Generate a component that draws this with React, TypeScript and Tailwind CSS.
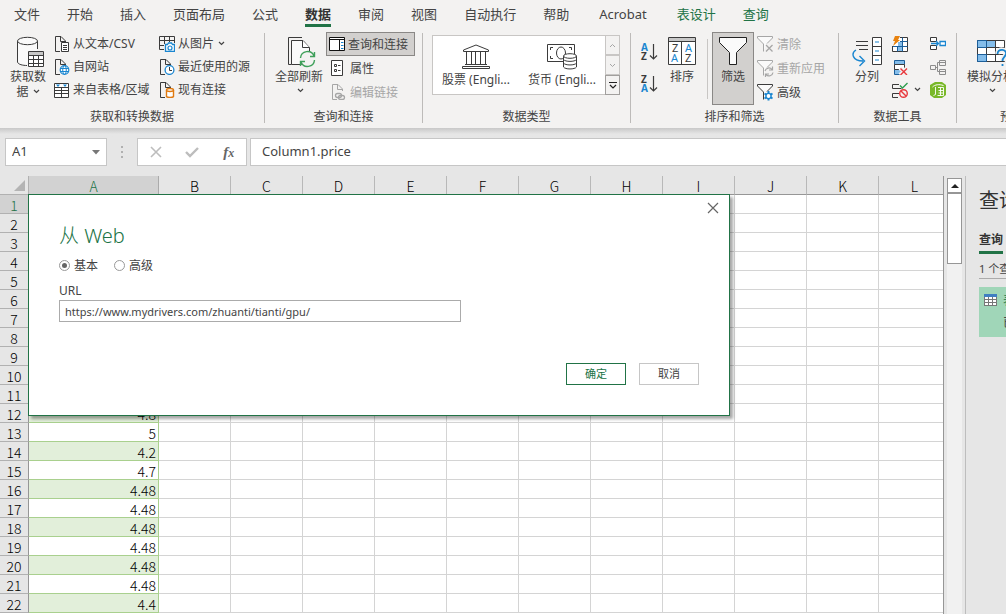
import { useState } from 'react'
import type { ReactNode } from 'react'
import clsx from 'clsx'

const INK = '#3b3b3b'
const BLUE = '#1a86d0'
const GRAY = '#a6a6a6'

const tabs = ['文件', '开始', '插入', '页面布局', '公式', '数据', '审阅', '视图', '自动执行', '帮助', 'Acrobat', '表设计', '查询']
const columns = 'ABCDEFGHIJKLMNOPQRST'.split('')
const values = ['', '', '', '', '', '', '', '', '', '', '', '4.8', '5', '4.2', '4.7', '4.48', '4.48', '4.48', '4.48', '4.48', '4.48', '4.4']

function Svg({ w = 16, h = 16, children }: { w?: number; h?: number; children: ReactNode }) {
  return (
    <svg width={w} height={h} viewBox={`0 0 ${w} ${h}`} fill="none" className="shrink-0" aria-hidden="true">
      {children}
    </svg>
  )
}

function Chevron() {
  return (
    <Svg w={7} h={5}>
      <path d="M1 1l2.5 2.5L6 1" stroke="#444" strokeWidth="1.2" />
    </Svg>
  )
}

// page outline shared by several of the small icons
function Page({ color = INK }: { color?: string }) {
  return (
    <>
      <path d="M6 15.5H1.5V.5H7L11.5 5V7" fill="none" stroke={color} />
      <path d="M6.5.5V5.5H11.5" stroke={color} />
    </>
  )
}

function TextFileIcon() {
  return (
    <Svg>
      <Page />
      <path d="M7.5 6.5H14.5V15.5H7.5Z" fill="#fff" stroke={INK} />
      <path d="M9 9.5H13M9 11.5H13M9 13.5H13" stroke={INK} />
    </Svg>
  )
}

function WebIcon() {
  return (
    <Svg>
      <Page />
      <circle cx="10.5" cy="11" r="4.3" fill="#fff" stroke={BLUE} strokeWidth="1.2" />
      <ellipse cx="10.5" cy="11" rx="1.8" ry="4.3" stroke={BLUE} />
      <path d="M6.5 9.5H14.5M6.5 12.5H14.5" stroke={BLUE} />
    </Svg>
  )
}

function RangeIcon() {
  return (
    <Svg>
      <path d="M.5 1.5H14.5V15.5H.5ZM.5 5.5H14.5M.5 8.5H14.5M.5 11.5H14.5M7.5 5.5V15.5" fill="#fff" stroke={INK} />
      <path d="M2 2.500H6L4 5ZM9 2.500H13L11 5Z" fill={BLUE} />
    </Svg>
  )
}

function PictureIcon() {
  return (
    <Svg>
      <path d="M.5 .5H15.5V7M.5 .5V13.5H5M.5 4.5H15.5M.5 9.5H5M5.5 .5V8M10.5 .5V6" stroke={INK} />
      <path d="M6.5 8.5H8.5L9.5 7H12.5L13.5 8.5H15.5V15.5H6.5Z" fill="#fff" stroke={BLUE} strokeWidth="1.3" />
      <circle cx="11" cy="12" r="2" stroke={BLUE} strokeWidth="1.2" />
    </Svg>
  )
}

function RecentIcon() {
  return (
    <Svg>
      <Page />
      <circle cx="10.5" cy="11" r="4.4" fill="#fff" stroke={BLUE} strokeWidth="1.3" />
      <path d="M10.5 8V11.5H13" stroke={INK} />
    </Svg>
  )
}

function ConnectionIcon() {
  return (
    <Svg>
      <Page />
      <path d="M7.5 8V14.5C8.5 15.8 13.500 15.800 14.500 14.500V8" fill="#fff" stroke="#e07a10" strokeWidth="1.4" />
      <ellipse cx="11" cy="8" rx="3.5" ry="1.5" fill="#fff" stroke="#e07a10" strokeWidth="1.4" />
    </Svg>
  )
}

function DatabaseIcon() {
  return (
    <Svg w={28} h={32}>
      <path d="M2 6H21V15H13V29C6 29 2 28 2 26Z" fill="#fafafa" />
      <path d="M1.5 5V26C2 28.5 7 29.5 11 29.5M21.5 5V13" stroke={INK} />
      <ellipse cx="11.5" cy="5" rx="10" ry="3.7" fill="#fafafa" stroke={INK} />
      <path d="M12.5 15.5H27.5V30.5H12.5Z" fill="#fff" stroke={INK} />
      <path d="M13 16H27V19H13Z" fill="#c8c8c8" />
      <path d="M12.5 19.5H27.5M12.5 23.5H27.5M12.5 27.5H27.5M17.5 19.5V30.5M22.5 19.5V30.5" stroke={INK} />
    </Svg>
  )
}

function RefreshAllIcon() {
  return (
    <Svg w={28} h={32}>
      <path d="M3.5 28.5H.5V1.5H14" stroke={INK} />
      <path d="M14 28.5H3.5V4.5H15L21.5 11.5V15" fill="#fafafa" stroke={INK} />
      <path d="M14.5 4.5V11.5H21.5" fill="#fff" stroke={INK} />
      <circle cx="19.5" cy="23" r="8" fill="#f3f2f1" />
      <path d="M12.5 22A7 7 0 0 1 26 20M26.500 24A7 7 0 0 1 13 26M26.500 16V20.500H22M12.500 30V25.500H17" stroke="#3fa05a" strokeWidth="1.400" />
    </Svg>
  )
}

function PaneIcon() {
  return (
    <Svg>
      <path d="M.5 1.5H15.5V14.5H.5Z" fill="#fff" stroke="#111" />
      <path d="M.5 3.5H15.5M10.5 3.5V14.5" stroke="#111" />
      <path d="M12 6.5H14.5M12 9.5H14.5M12 12.5H14.5" stroke={BLUE} />
    </Svg>
  )
}

function PropertiesIcon() {
  return (
    <Svg>
      <path d="M.5 .5H11.5V15.5H.5Z" fill="#fff" stroke={INK} />
      <path d="M3.500 4.500H5.500V6.500H3.500ZM3.500 9.500H5.500V11.500H3.500Z" stroke={INK} />
      <path d="M7 5.5H9.5M7 10.5H9.5" stroke={INK} />
    </Svg>
  )
}

function EditLinksIcon() {
  return (
    <Svg>
      <Page color={GRAY} />
      <rect x="4.5" y="9.5" width="6" height="4" rx="2" stroke={GRAY} strokeWidth="1.3" />
      <rect x="7.5" y="11.5" width="6" height="4" rx="2" stroke={GRAY} strokeWidth="1.3" />
    </Svg>
  )
}

function BankIcon() {
  return (
    <Svg w={28} h={26}>
      <path d="M1.5 7.5V6L14 1L26.5 6V7.5Z" fill="#fff" stroke={INK} />
      <path d="M4.5 8V20M9.5 8V20M13.500 8V20M18.500 8V20M23.500 8V20M3 20.500H25M.5 24.500V22.500H27.500V24.500Z" stroke={INK} />
    </Svg>
  )
}

function MoneyIcon() {
  return (
    <Svg w={31} h={28}>
      <path d="M.5 2.5H27.5V19.5H.5Z" fill="#fff" stroke={INK} />
      <path d="M6 5.5H3.5V8M3.5 14V16.5H6M22 5.5H24.5V8" stroke={INK} />
      <ellipse cx="14" cy="11" rx="4.5" ry="6" stroke={INK} />
      <path d="M16.5 14V25C18 27.6 28 27.6 29.5 25V14" fill="#fff" stroke={INK} />
      <ellipse cx="23" cy="14" rx="6.5" ry="2.3" fill="#fff" stroke={INK} />
      <path d="M16.5 17.5C18 20 28 20 29.5 17.5M16.5 21C18 23.6 28 23.6 29.5 21" stroke={INK} />
    </Svg>
  )
}

function SortArrowIcon({ top, bottom }: { top: string; bottom: string }) {
  return (
    <svg width={18} height={20} viewBox="0 0 18 20" className="overflow-visible" aria-hidden="true" fontFamily="Noto Sans, sans-serif" fontWeight="700" fontSize="10">
      <text x="0" y="9" fill={top === 'A' ? BLUE : INK}>{top}</text>
      <text x="0" y="18" fill={bottom === 'A' ? BLUE : INK}>{bottom}</text>
      <path d="M12.5 2V17M9 13.5L12.5 17L16 13.5" fill="none" stroke={INK} strokeWidth="1.2" />
    </svg>
  )
}

function SortIcon() {
  return (
    <svg width={28} height={32} viewBox="0 0 28 32" aria-hidden="true" fontFamily="Noto Sans, sans-serif" fontSize="11">
      <path d="M.5 1.5H27.5V28.5H.5Z" fill="#fff" stroke={INK} />
      <path d="M1 2H27V5H1Z" fill="#c8c8c8" />
      <path d="M.5 5.5H27.5M13.5 5.5V28.5" stroke={INK} />
      <text x="4" y="16" fill={INK}>Z</text>
      <text x="3" y="26" fill={BLUE}>A</text>
      <text x="17" y="16" fill={BLUE}>A</text>
      <text x="17" y="26" fill={INK}>Z</text>
    </svg>
  )
}

function FunnelIcon() {
  return (
    <Svg w={28} h={32}>
      <path d="M.5 1.5H27.5V6.5L17.5 16.5V28.5H10.5V16.5L.5 6.5Z" fill="#fafafa" stroke="#222" />
    </Svg>
  )
}

function SmallFunnel({ color, children }: { color: string; children: ReactNode }) {
  return (
    <Svg w={17} h={17}>
      <path d="M6.5 15.5V8L.5 2V.5H15.5V2L10 7.5" fill="#fafafa" stroke={color} />
      {children}
    </Svg>
  )
}

function ClearIcon() {
  return (
    <SmallFunnel color={GRAY}>
      <path d="M9 9L15.5 15.5M15.5 9L9 15.5" stroke={GRAY} strokeWidth="1.3" />
    </SmallFunnel>
  )
}

function ReapplyIcon() {
  return (
    <SmallFunnel color={GRAY}>
      <path d="M8 11A4 4 0 0 1 15 9.5M16 12.5A4 4 0 0 1 9 14.5M15.5 6.5V10H12M8.5 17V14H12" stroke={GRAY} strokeWidth="1.2" />
    </SmallFunnel>
  )
}

function AdvancedIcon() {
  return (
    <SmallFunnel color={INK}>
      <path d="M11.5 7V16.5M7.5 9.5L15.5 14.5M15.5 9.5L7.5 14.5" stroke={BLUE} strokeWidth="2" />
      <circle cx="11.5" cy="12" r="2.6" fill="#fff" stroke={BLUE} strokeWidth="1.4" />
    </SmallFunnel>
  )
}

function SplitIcon() {
  return (
    <Svg w={30} h={32}>
      <path d="M4 5.5H16M4 9.5H16M7 13.5H16" stroke={INK} />
      <path d="M20.5 1.5H29.5V28.5H20.5ZM20.5 10.5H29.5M20.5 19.5H29.5" fill="#fff" stroke={INK} />
      <path d="M23 6H27M23 15H27M23 24H27" stroke={BLUE} strokeWidth="1.2" />
      <path d="M4 14C-1 17 0 25 11 25M7.5 20L12.5 25L7.5 30" stroke={BLUE} strokeWidth="1.4" />
    </Svg>
  )
}

function FlashFillIcon() {
  return (
    <Svg>
      <path d="M8 1.5H15.5V15.5H.5V10" fill="#fff" stroke={INK} />
      <path d="M6 6H10V15H6Z" fill="#84bdea" />
      <path d="M1 10.5H15.5M8 5.5H15.5M5.5 10.5V15.5M10.5 1.5V15.5" stroke="#1c5f9a" />
      <path d="M3 0H8L6 4H8L1 10L3 5H1Z" fill="#e8820e" />
    </Svg>
  )
}

function DuplicatesIcon() {
  return (
    <Svg>
      <path d="M2.5 1.5H12.5V5.5H2.5ZM2.5 10.5H9V15.5H2.5Z" fill="#84bdea" stroke="#1c5f9a" />
      <path d="M2.5 5.5H12.5V10.5H2.5Z" fill="#fff" stroke={INK} />
      <path d="M8 9L15 16M15 9L8 16" stroke="#f3f2f1" strokeWidth="4" />
      <path d="M8.5 9.5L15 16M15 9.5L8.5 16" stroke="#e8383d" strokeWidth="1.4" />
    </Svg>
  )
}

function ValidationIcon() {
  return (
    <Svg>
      <path d="M7 2.5H.5V6.5H9.5M7 11.5H.5V15.5H6" stroke={INK} />
      <path d="M8 3.5L10.5 6L15.5 1" stroke="#2e9e4f" strokeWidth="1.4" />
      <circle cx="11.5" cy="11.5" r="3.8" stroke="#e8383d" strokeWidth="1.4" />
      <path d="M9 9L14 14" stroke="#e8383d" strokeWidth="1.4" />
    </Svg>
  )
}

function ConsolidateIcon() {
  return (
    <Svg>
      <path d="M6.5 5V1.5H.5V5.5H6.5M.5 9.5H6.5V13.5H.5Z" fill="#fff" stroke={INK} />
      <path d="M1 7.5H8M6 5L8.5 7.5L6 10" stroke={BLUE} strokeWidth="1.3" />
      <path d="M10 5.5H15.5V9.5H10Z" fill="#fff" stroke={BLUE} strokeWidth="1.3" />
    </Svg>
  )
}

function RelationshipsIcon() {
  return (
    <Svg>
      <path d="M.5 6.5H5.5V10.5H.5ZM9.5 1.5H15.5V6.5H9.5ZM9.5 10.5H15.5V15.5H9.5ZM5.5 8.5H7.5M9.5 3.5H7.5V12.5H9.5M9.5 3.5H15.5M9.5 12.5H15.5" stroke="#8c8c8c" />
    </Svg>
  )
}

function ModelIcon() {
  return (
    <Svg>
      <path d="M0 3L5 0H12L16 3V13L12 16H4L0 13Z" fill="#79b829" />
      <path d="M2.500 5C5 2.500 9 2 13.500 3.500" stroke="#fff" />
      <path d="M5.500 5V12.500L3.500 13.500M8 5.500H13.500V13.500H7.500M8.500 8.500H13.500M8.500 11H13.500M10.500 5.500V13.500" stroke="#fff" strokeWidth=".9" />
    </Svg>
  )
}

function WhatIfIcon() {
  return (
    <Svg w={31} h={32}>
      <path d="M1.5 4.5H28.5V25.5H1.5Z" fill="#fff" stroke={INK} />
      <path d="M2 5H11V11H2ZM2 19H11V25H2ZM11 5H19V11H11Z" fill="#84bdea" />
      <path d="M1.5 11.5H28.5M1.5 18.5H28.5M10.5 4.5V25.5M19.5 4.5V25.5" stroke={INK} />
      <path d="M1.5 4.5H10.5V11.5H1.5ZM1.5 18.5H10.5V25.5H1.5Z" stroke="#1c5f9a" />
      <path d="M21.5 18C22 12 31 13 30 18C29.5 21 26.5 21 26.5 25M26.5 27.5V30" stroke="#f3f2f1" strokeWidth="5" />
      <path d="M21.5 18C22 12 31 13 30 18C29.5 21 26.5 21 26.5 25M26.5 28V30" stroke={BLUE} strokeWidth="1.8" />
    </Svg>
  )
}

function Group({ label, className, children }: { label: string; className: string; children: ReactNode }) {
  return (
    <>
      <section aria-label={label} className={clsx('flex shrink-0 flex-col', className)}>
        <div className="flex h-[76px] items-start">{children}</div>
        <div className="text-center leading-[18px]">{label}</div>
      </section>
      <div className="mt-px h-[90px] w-px shrink-0 bg-[#bdbbb9]" />
    </>
  )
}

function Small({ icon, label, disabled, className }: { icon: ReactNode; label: ReactNode; disabled?: boolean; className?: string }) {
  return (
    <button
      type="button"
      disabled={disabled}
      className={clsx('flex items-center gap-[3px] whitespace-nowrap disabled:text-[#a6a6a6]', className)}
    >
      {icon}
      {label}
    </button>
  )
}

function Ribbon() {
  return (
    <div className="flex h-24 overflow-hidden text-[12px] leading-[15px] text-[#444]">
      <Group label="获取和转换数据" className="w-[264px]">
        <button type="button" className="ml-2.5 flex w-9 flex-col items-center whitespace-nowrap pt-1">
          <span className="pb-px pl-1"><DatabaseIcon /></span>
          获取数
          <span className="flex items-center gap-1">据 <Chevron /></span>
        </button>
        <div className="ml-2 w-[105px]">
          <Small className="h-[23px]" icon={<TextFileIcon />} label="从文本/CSV" />
          <Small className="h-[23px]" icon={<WebIcon />} label="自网站" />
          <Small className="h-[23px]" icon={<RangeIcon />} label="来自表格/区域" />
        </div>
        <div>
          <Small className="h-[23px]" icon={<PictureIcon />} label={<span className="flex items-center gap-1">从图片 <Chevron /></span>} />
          <Small className="h-[23px]" icon={<RecentIcon />} label="最近使用的源" />
          <Small className="h-[23px]" icon={<ConnectionIcon />} label="现有连接" />
        </div>
      </Group>

      <Group label="查询和连接" className="w-[157px]">
        <button type="button" className="ml-2.5 flex w-12 flex-col items-center whitespace-nowrap pt-1">
          <span className="pb-px pl-1.5"><RefreshAllIcon /></span>
          全部刷新
          <span className="pl-0.5 pt-1"><Chevron /></span>
        </button>
        <div className="ml-[3px]">
          <Small className="h-6 w-[89px] border border-[#8a8886] bg-[#d2d0ce] pl-0.5" icon={<PaneIcon />} label="查询和连接" />
          <Small className="h-6 pl-[5px]" icon={<PropertiesIcon />} label="属性" />
          <Small className="h-6 pl-[5px]" icon={<EditLinksIcon />} label="编辑链接" disabled />
        </div>
      </Group>

      <Group label="数据类型" className="w-[207px]">
        <div className="ml-[9px] mt-[3px] flex h-[60px] w-[188px] border border-[#c8c6c4] bg-white">
          <button type="button" className="flex flex-1 flex-col items-center justify-end gap-0.5 whitespace-nowrap pb-[7px]">
            <BankIcon />
            股票 (Engli...
          </button>
          <button type="button" className="flex flex-1 flex-col items-center justify-end gap-0.5 whitespace-nowrap pb-[7px]">
            <MoneyIcon />
            货币 (Engli...
          </button>
          <div className="-my-px -mr-px flex w-[15px] flex-col bg-[#f3f2f1]">
            <button type="button" disabled aria-label="上一行" className="flex flex-1 items-center justify-center border border-[#c8c6c4]">
              <Svg w={7} h={5}><path d="M1 4l2.5-2.5L6 4" stroke={GRAY} /></Svg>
            </button>
            <button type="button" disabled aria-label="下一行" className="flex flex-1 items-center justify-center border border-[#c8c6c4]">
              <Svg w={7} h={5}><path d="M1 1l2.5 2.5L6 1" stroke={GRAY} /></Svg>
            </button>
            <button type="button" aria-label="其他" className="flex flex-1 items-center justify-center border border-[#a19f9d]">
              <Svg w={8} h={8}><path d="M0 1.5H8M1 4L4 7L7 4" stroke="#222" strokeWidth="1.2" /></Svg>
            </button>
          </div>
        </div>
      </Group>

      <Group label="排序和筛选" className="w-[207px]">
        <div className="ml-2.5 flex w-5 flex-col pt-1">
          <button type="button" aria-label="升序" className="flex h-8 items-center"><SortArrowIcon top="A" bottom="Z" /></button>
          <button type="button" aria-label="降序" className="flex h-8 items-center"><SortArrowIcon top="Z" bottom="A" /></button>
        </div>
        <button type="button" className="ml-[7px] flex flex-col items-center pt-1">
          <span className="pb-px"><SortIcon /></span>
          排序
        </button>
        <div className="ml-[11px] mt-[7px] h-[60px] w-px bg-[#c8c6c4]" />
        <button type="button" className="ml-1 flex h-[73px] w-[42px] flex-col items-center border border-[#8a8886] bg-[#d2d0ce] pt-[3px]">
          <span className="pb-px"><FunnelIcon /></span>
          筛选
        </button>
        <div className="ml-[3px]">
          <Small className="h-6" icon={<ClearIcon />} label="清除" disabled />
          <Small className="h-6" icon={<ReapplyIcon />} label="重新应用" disabled />
          <Small className="h-6" icon={<AdvancedIcon />} label="高级" />
        </div>
      </Group>

      <Group label="数据工具" className="w-[117px]">
        <button type="button" className="ml-[13px] flex w-[30px] flex-col items-center pt-1">
          <span className="pb-px"><SplitIcon /></span>
          分列
        </button>
        <div className="ml-2.5 w-[38px]">
          <button type="button" aria-label="快速填充" className="flex h-[23px] items-center"><FlashFillIcon /></button>
          <button type="button" aria-label="删除重复值" className="flex h-[23px] items-center"><DuplicatesIcon /></button>
          <button type="button" aria-label="数据验证" className="flex h-[23px] items-center gap-1.5"><ValidationIcon /><Chevron /></button>
        </div>
        <div>
          <button type="button" aria-label="合并计算" className="flex h-[23px] items-center"><ConsolidateIcon /></button>
          <button type="button" aria-label="关系" disabled className="flex h-[23px] items-center"><RelationshipsIcon /></button>
          <button type="button" aria-label="管理数据模型" className="flex h-[23px] items-center"><ModelIcon /></button>
        </div>
      </Group>

      <Group label="预测" className="w-[110px]">
        <button type="button" className="ml-2.5 flex w-12 flex-col items-center whitespace-nowrap pt-1">
          <span className="pb-px"><WhatIfIcon /></span>
          模拟分析
          <span className="pl-0.5 pt-1"><Chevron /></span>
        </button>
      </Group>
    </div>
  )
}

function FormulaBar() {
  return (
    <div className="flex h-7 items-stretch pl-[5px] text-[13px] text-[#444]">
      <div className="flex w-[102px] items-center border border-[#c6c6c6] bg-white pl-1.5 pr-1.5">
        <input aria-label="名称框" defaultValue="A1" className="w-0 flex-1 outline-none" />
        <button type="button" aria-label="名称列表">
          <Svg w={8} h={5}><path d="M0 0H8L4 4.5Z" fill="#777" /></Svg>
        </button>
      </div>
      <div className="flex w-[30px] items-center justify-center">
        <Svg w={2} h={12}><path d="M0 0H2V2H0ZM0 5H2V7H0ZM0 10H2V12H0Z" fill="#b0b0b0" /></Svg>
      </div>
      <div className="flex w-[110px] items-center justify-around border border-[#c6c6c6] bg-white">
        <button type="button" aria-label="取消">
          <Svg w={12} h={12}><path d="M1 1L11 11M11 1L1 11" stroke="#bdbdbd" strokeWidth="1.6" /></Svg>
        </button>
        <button type="button" aria-label="输入">
          <Svg w={14} h={12}><path d="M1 6L5 10L13 2" stroke="#bdbdbd" strokeWidth="2.4" /></Svg>
        </button>
        <button type="button" aria-label="插入函数" className="font-['Liberation_Serif',serif] text-[15px] font-bold italic leading-5 text-[#666]">
          f<span className="text-[12px]">x</span>
        </button>
      </div>
      <input
        aria-label="编辑栏"
        defaultValue="Column1.price"
        className="ml-[3px] min-w-0 flex-1 border border-r-0 border-[#c6c6c6] bg-white pl-[11px] outline-none"
      />
    </div>
  )
}

function Sheet() {
  return (
    <div className="min-w-0 flex-1 overflow-hidden border-r border-[#969696] bg-white">
      <table className="w-[1527px] table-fixed border-separate border-spacing-0 font-['Noto_Sans_CJK_SC',sans-serif] text-[14px] leading-4 text-black">
        <colgroup>
          <col className="w-[29px]" />
          <col className="w-[130px]" />
          {columns.slice(1).map((c) => (
            <col key={c} className="w-[72px]" />
          ))}
        </colgroup>
        <thead>
          <tr className="h-[19px] bg-[#e6e6e6]">
            <th className="border-b border-r border-[#b1b1b1] p-0">
              <div className="flex justify-end pr-[3px]">
                <Svg w={11} h={11}><path d="M11 0V11H0Z" fill="#b4b4b4" /></Svg>
              </div>
            </th>
            {columns.map((c) => (
              <th
                key={c}
                scope="col"
                className={clsx(
                  'h-[19px] border-b border-r p-0 align-bottom font-light',
                  c === 'A' ? 'border-b-[#217346] border-r-[#ababab] bg-[#d2d2d2] text-[#217346]' : 'border-b-[#969696] border-r-[#b8b8b8]',
                )}
              >
                {c}
              </th>
            ))}
          </tr>
        </thead>
        <tbody>
          {values.map((v, i) => (
            <tr key={i} className="h-[19px]">
              <th
                scope="row"
                className={clsx(
                  'h-[19px] border-b border-r border-b-[#b1b1b1] border-r-[#969696] p-0 pt-0.5 font-light',
                  i === 0 ? 'bg-[#d2d2d2] text-[#217346]' : 'bg-[#e6e6e6]',
                )}
              >
                {i + 1}
              </th>
              {columns.map((c) => (
                <td
                  key={c}
                  className={clsx(
                    'border-b border-r p-0 pt-0.5 text-right font-light',
                    c === 'A' ? 'border-[#a9d08e] pr-0.5' : 'border-[#d4d4d4]',
                    c === 'A' && i % 2 === 1 && 'bg-[#e2efda]',
                  )}
                >
                  {c === 'A' ? v : ''}
                </td>
              ))}
            </tr>
          ))}
        </tbody>
      </table>
    </div>
  )
}

function WebDialog() {
  const [mode, setMode] = useState('basic')
  const [url, setUrl] = useState('https://www.mydrivers.com/zhuanti/tianti/gpu/')
  const radio = '-mt-0.5 size-[11px] appearance-none rounded-full border border-[#999] bg-clip-content p-[2px] checked:bg-[#666]'

  return (
    <form
      role="dialog"
      aria-labelledby="dialog-title"
      onSubmit={(e) => e.preventDefault()}
      className="absolute left-7 top-[18px] w-[702px] border border-[#217346] bg-white px-[30px] pb-[30px] text-[12px] leading-4 text-[#444] shadow-[3px_3px_3px_rgba(0,0,0,0.35)]"
    >
      <div className="-mr-5 flex h-[26px] items-center justify-end">
        <button type="button" aria-label="关闭">
          <Svg w={12} h={12}><path d="M1 1L11 11M11 1L1 11" stroke="#666" strokeWidth="1.2" /></Svg>
        </button>
      </div>
      <h1 id="dialog-title" className="mt-px text-[20px] font-light leading-7 text-[#217346]">从 Web</h1>
      <div className="mt-2 flex gap-4">
        <label className="flex items-center gap-1">
          <input type="radio" name="mode" className={radio} checked={mode === 'basic'} onChange={() => setMode('basic')} />
          基本
        </label>
        <label className="flex items-center gap-1">
          <input type="radio" name="mode" className={radio} checked={mode === 'advanced'} onChange={() => setMode('advanced')} />
          高级
        </label>
      </div>
      <label htmlFor="url" className="mt-[9px] block">URL</label>
      <input
        id="url"
        value={url}
        onChange={(e) => setUrl(e.target.value)}
        className="mt-px block h-[22px] w-[402px] border border-[#ababab] pl-[5px] text-[11px] outline-none"
      />
      <div className="mt-[41px] flex justify-end gap-[13px]">
        <button type="submit" className="h-[22px] w-[60px] border border-[#217346] text-[11px] text-[#217346]">确定</button>
        <button type="button" className="h-[22px] w-[60px] border border-[#c6c6c6] text-[11px]">取消</button>
      </div>
    </form>
  )
}

function QueryPane() {
  return (
    <aside className="w-[41px] shrink-0 overflow-hidden whitespace-nowrap border-l border-[#bdbdbd] pl-[13px] text-[12px] text-[#444]">
      <h2 className="mt-[9px] text-[20px] leading-8 text-[#333]">查询和连接</h2>
      <div className="mt-3.5 flex">
        <button type="button" className="border-b-[3px] border-[#217346] pb-0.5 font-bold leading-[18px] text-[#333]">查询</button>
      </div>
      <p className="mt-1.5 border-b border-[#ababab] text-[11px] leading-[18px]">1 个查询</p>
      <div className="mt-2 flex h-[50px] w-[220px] gap-1.5 bg-[#a0d6b8] pl-[5px] pt-[5px]">
        <span className="pt-0.5">
          <Svg w={13} h={12}>
            <path d="M0 0H13V12H0Z" fill="#777" />
            <path d="M0 0H13V3H0Z" fill="#3f7fc1" />
            <path d="M1 3H4V5H1ZM5 3H8V5H5ZM9 3H12V5H9ZM1 6H4V8H1ZM5 6H8V8H5ZM9 6H12V8H9ZM1 9H4V11H1ZM5 9H8V11H5ZM9 9H12V11H9Z" fill="#fff" />
          </Svg>
        </span>
        <div>
          <div className="leading-[18px] text-[#217346]">表 1</div>
          <div className="pt-1 leading-[18px]">已加载</div>
        </div>
      </div>
    </aside>
  )
}

export default function App() {
  const [active, setActive] = useState('数据')

  return (
    <div className="flex h-screen flex-col overflow-hidden bg-[#e6e6e6] font-['Noto_Sans','Noto_Sans_CJK_SC',sans-serif]">
      <header className="shrink-0 bg-[#f3f2f1]">
        <nav className="flex h-8 items-start gap-[27px] overflow-hidden whitespace-nowrap pl-3.5 text-[13px] leading-5 text-[#444]">
          {tabs.map((t) => (
            <button
              key={t}
              type="button"
              onClick={() => setActive(t)}
              className={clsx(
                'h-[27px] border-b-[3px] pt-1',
                t === active ? 'border-[#217346] font-bold text-[#333]' : 'border-transparent',
                t === 'Acrobat' && 'px-[3px]',
                (t === '表设计' || t === '查询') && 'text-[#217346]',
              )}
            >
              {t}
            </button>
          ))}
        </nav>
        <Ribbon />
      </header>
      <div className="h-2.5 shrink-0 bg-linear-to-b from-[#c8c8c8] to-[#e6e6e6] to-60%" />
      <FormulaBar />
      <main className="relative mt-2.5 flex min-h-0 flex-1">
        <Sheet />
        <div className="mx-[3px] mt-0.5 flex w-[15px] shrink-0 flex-col bg-[#f1f1f1]">
          <button type="button" aria-label="向上滚动" className="flex h-[15px] items-center justify-center border border-[#969696] bg-white">
            <Svg w={8} h={4}><path d="M0 4L4 0L8 4Z" fill="#222" /></Svg>
          </button>
          <div className="h-[71px] border border-[#969696] bg-white" />
        </div>
        <QueryPane />
        <WebDialog />
      </main>
    </div>
  )
}
